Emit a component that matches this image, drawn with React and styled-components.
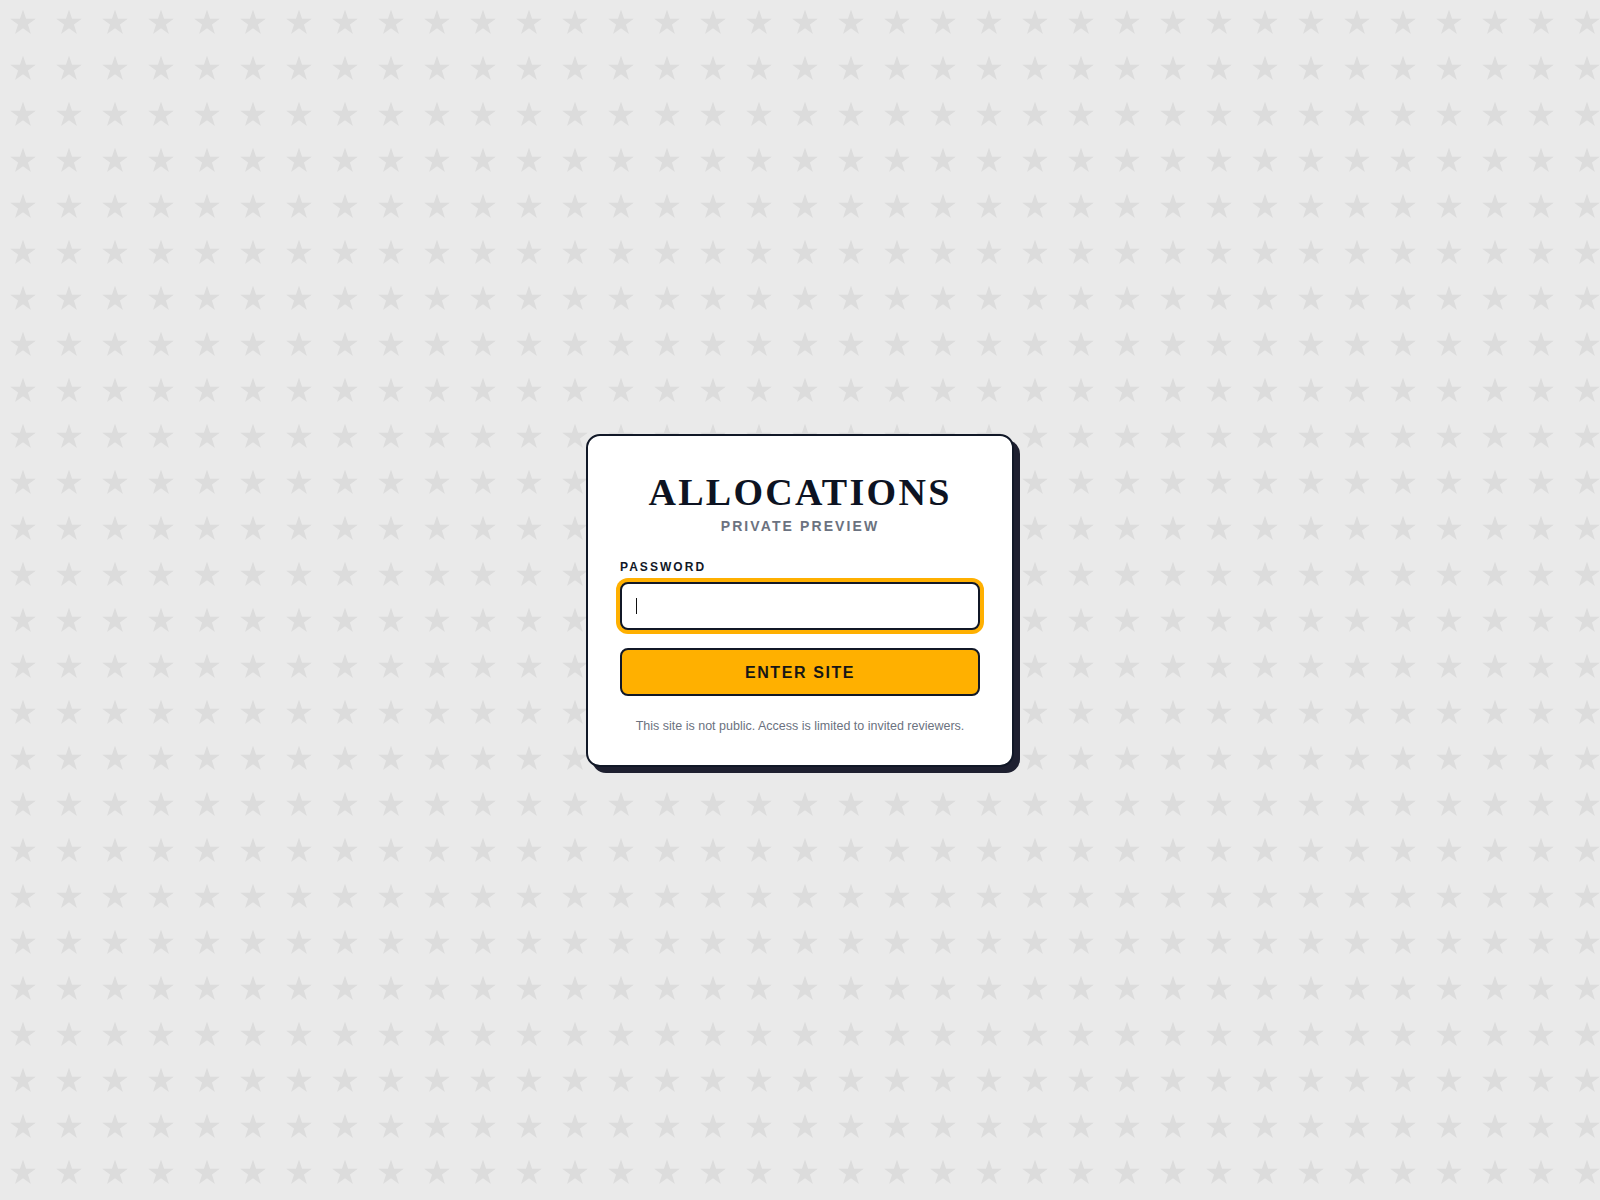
import React from "react";
import styled, { createGlobalStyle } from "styled-components";

const starTile = encodeURIComponent(
  `<svg xmlns="http://www.w3.org/2000/svg" width="46" height="46" viewBox="0 0 46 46"><polygon fill="#dcdcdc" points="23,9.5 26.06,18.79 35.84,18.83 27.95,24.61 30.94,33.92 23,28.2 15.06,33.92 18.05,24.61 10.16,18.83 19.94,18.79"/></svg>`
);

const GlobalStyle = createGlobalStyle`
  * {
    box-sizing: border-box;
  }
  body {
    margin: 0;
    font-family: "Liberation Sans", Arial, sans-serif;
    background-color: #eaeaea;
    background-image: url("data:image/svg+xml,${starTile}");
    background-size: 46px 46px;
  }
`;

const Page = styled.div`
  min-height: 100vh;
  display: flex;
  align-items: center;
  justify-content: center;
`;

const Card = styled.div`
  width: 428px;
  background: #ffffff;
  border: 2px solid #111827;
  border-radius: 14px;
  box-shadow: 6px 6px 0 #1e2030;
  padding: 32px 32px 30px;
`;

const Title = styled.h1`
  margin: 0;
  text-align: center;
  font-family: "Liberation Serif", "Times New Roman", serif;
  font-weight: 700;
  font-size: 38px;
  line-height: 48px;
  letter-spacing: 0.06em;
  color: #0d1322;
`;

const Subtitle = styled.div`
  margin-top: 2px;
  text-align: center;
  font-size: 14px;
  font-weight: 700;
  letter-spacing: 0.15em;
  color: #6b7280;
`;

const Form = styled.form`
  margin-top: 26px;
  display: flex;
  flex-direction: column;
`;

const Label = styled.label`
  font-size: 12px;
  font-weight: 700;
  letter-spacing: 0.17em;
  color: #111827;
  margin-bottom: 8px;
`;

const Field = styled.div`
  position: relative;
`;

const Input = styled.input`
  display: block;
  width: 100%;
  height: 48px;
  border: 2px solid #111827;
  border-radius: 8px;
  padding: 0 14px;
  font-size: 16px;
  font-family: "Liberation Sans", Arial, sans-serif;
  color: #111827;
  caret-color: transparent;
  outline: none;
  box-shadow: 0 0 0 4px #ffb000;
`;

const Caret = styled.span`
  position: absolute;
  left: 16px;
  top: 16px;
  width: 1px;
  height: 16px;
  background: #111111;
  pointer-events: none;
`;

const Button = styled.button`
  margin-top: 18px;
  width: 100%;
  height: 48px;
  padding: 3px 0 0;
  border: 2px solid #111827;
  border-radius: 8px;
  background: #ffb000;
  color: #161616;
  font-family: "Liberation Sans", Arial, sans-serif;
  font-size: 16px;
  font-weight: 700;
  letter-spacing: 0.1em;
  cursor: pointer;
`;

const Note = styled.p`
  margin: 21px 0 0;
  text-align: center;
  font-size: 12.5px;
  line-height: 18px;
  color: #6b7280;
`;

export default function App() {
  return (
    <>
      <GlobalStyle />
      <Page>
        <Card>
          <Title>ALLOCATIONS</Title>
          <Subtitle>PRIVATE PREVIEW</Subtitle>
          <Form onSubmit={(e) => e.preventDefault()}>
            <Label htmlFor="password">PASSWORD</Label>
            <Field>
              <Input id="password" type="password" />
              <Caret />
            </Field>
            <Button type="submit">ENTER SITE</Button>
          </Form>
          <Note>This site is not public. Access is limited to invited reviewers.</Note>
        </Card>
      </Page>
    </>
  );
}
